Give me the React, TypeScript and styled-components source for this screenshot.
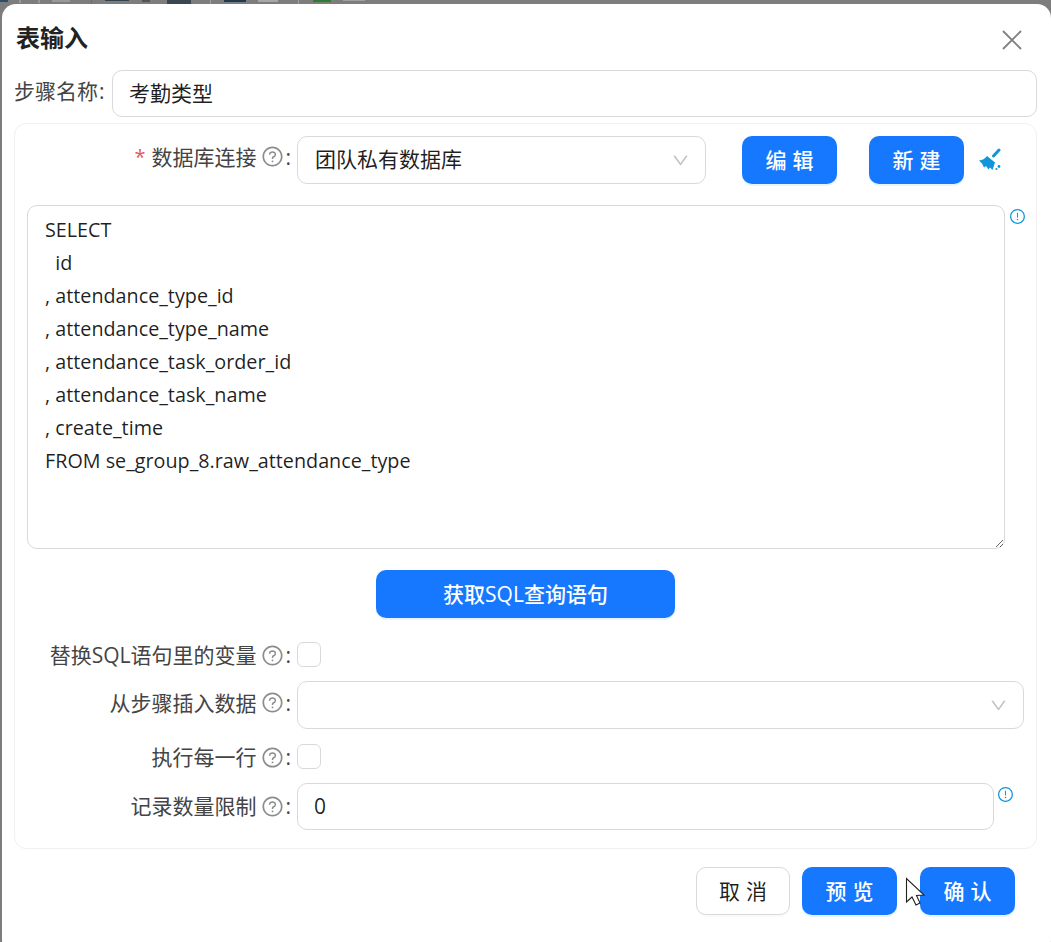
import styled, { createGlobalStyle } from 'styled-components';
import { AiOutlineDown, AiOutlineExclamationCircle, AiOutlineQuestionCircle } from 'react-icons/ai';

const sqlText = `SELECT
  id
, attendance_type_id
, attendance_type_name
, attendance_task_order_id
, attendance_task_name
, create_time
FROM se_group_8.raw_attendance_type`;

const GlobalStyle = createGlobalStyle`
  html, body {
    margin: 0;
    padding: 0;
    background: #7d7d7d;
  }
  * {
    box-sizing: border-box;
  }
`;

const Backdrop = styled.div`
  position: relative;
  width: 1051px;
  height: 942px;
  padding: 4px 0 0 2px;
  overflow: hidden;
  background: #7d7d7d;
  font-family: "Open Sans", "Noto Sans CJK SC", sans-serif;
  font-size: 21px;
  line-height: 24px;
  color: rgba(0, 0, 0, 0.88);
`;

const ToolbarPeek = styled.svg`
  position: absolute;
  top: 0;
  left: 0;
`;

const Modal = styled.div`
  position: relative;
  height: 950px;
  padding: 0 14px 0 12px;
  background: #fff;
  border-radius: 14px;
`;

const ModalHeader = styled.div`
  display: flex;
  align-items: center;
  justify-content: space-between;
  height: 66px;
  padding: 2px 15px 0 2px;
`;

const Title = styled.div`
  font-size: 24px;
  font-weight: 700;
  color: #222;
`;

const CloseIcon = styled.svg`
  display: block;
  margin-top: 4px;
`;

const NameRow = styled.div`
  display: flex;
  align-items: center;
  height: 47px;
`;

const NameLabel = styled.label`
  width: 98px;
  margin-top: -6px;
  color: #444;
  white-space: nowrap;
`;

const TextInput = styled.input<{ $width?: number }>`
  display: block;
  flex: ${({ $width }) => ($width ? 'none' : '1')};
  width: ${({ $width }) => ($width ? `${$width}px` : 'auto')};
  height: 47px;
  padding: 0 16px ${({ $width }) => ($width ? 1 : 3)}px;
  background: #fff;
  border: 1px solid #d9d9d9;
  border-radius: 10px;
  outline: none;
  font: inherit;
  color: rgba(0, 0, 0, 0.88);
`;

const Card = styled.div`
  margin-top: 6px;
  padding: 12px 12px 18px;
  border: 1px solid #f0f0f0;
  border-radius: 12px;
`;

const FormRow = styled.div<{ $top: number }>`
  display: flex;
  align-items: center;
  margin-top: ${({ $top }) => $top}px;
`;

const Label = styled.div<{ $lift: number }>`
  display: flex;
  flex: none;
  align-items: center;
  justify-content: flex-end;
  width: 270px;
  padding-right: 6px;
  margin-top: ${({ $lift }) => -$lift}px;
  color: #444;
  white-space: nowrap;
`;

const Required = styled.span`
  margin-right: 6px;
  color: #e5585f;
  font-size: 20px;
`;

const HelpIcon = styled(AiOutlineQuestionCircle)`
  flex: none;
  margin-left: 5px;
  font-size: 23px;
  color: #8c8c8c;
`;

const Colon = styled.span`
  margin-left: 1px;
`;

const SelectBox = styled.div<{ $width?: number }>`
  display: flex;
  flex: ${({ $width }) => ($width ? 'none' : '1')};
  align-items: center;
  justify-content: space-between;
  width: ${({ $width }) => ($width ? `${$width}px` : 'auto')};
  height: 48px;
  padding: 0 15px 0 17px;
  border: 1px solid #d9d9d9;
  border-radius: 10px;
`;

const SelectValue = styled.span`
  margin-top: -2px;
`;

const SelectArrow = styled(AiOutlineDown)`
  font-size: 19px;
  color: #bfbfbf;
`;

const Button = styled.button<{ $primary?: boolean; $width?: number; $spaced?: boolean }>`
  flex: none;
  width: ${({ $width }) => $width ?? 95}px;
  height: 48px;
  padding: 0;
  background: ${({ $primary }) => ($primary ? '#1677ff' : '#fff')};
  border: ${({ $primary }) => ($primary ? 'none' : '1px solid #d9d9d9')};
  border-radius: 10px;
  box-shadow: ${({ $primary }) =>
    $primary ? '0 2px 0 rgba(5, 145, 255, 0.1)' : '0 2px 0 rgba(0, 0, 0, 0.02)'};
  font: inherit;
  font-weight: ${({ $primary }) => ($primary ? 500 : 400)};
  color: ${({ $primary }) => ($primary ? '#fff' : 'rgba(0, 0, 0, 0.88)')};
  letter-spacing: ${({ $spaced }) => ($spaced ? '0.28em' : '0')};
  text-indent: ${({ $spaced }) => ($spaced ? '0.28em' : '0')};
`;

const ConnectionActions = styled.div`
  display: flex;
  align-items: center;
  margin-left: 36px;
`;

const NewButton = styled(Button)`
  margin-left: 32px;
`;

const BroomIcon = styled.svg`
  display: block;
  margin-left: 14px;
  color: #1296db;
`;

const SqlRow = styled.div`
  display: flex;
  align-items: flex-start;
  margin-top: 21px;
`;

const SqlArea = styled.textarea`
  display: block;
  flex: none;
  width: 978px;
  height: 344px;
  padding: 7px 17px;
  border: 1px solid #d9d9d9;
  border-radius: 10px;
  outline: none;
  font: inherit;
  font-size: 19.75px;
  line-height: 33px;
  color: rgba(0, 0, 0, 0.88);
`;

const InfoIcon = styled(AiOutlineExclamationCircle)`
  flex: none;
  margin: 3px 0 0 4px;
  font-size: 17px;
  color: #1296db;
`;

const LimitInfoIcon = styled(InfoIcon)`
  align-self: flex-start;
  margin-left: 3px;
`;

const CheckBox = styled.span`
  display: block;
  width: 24px;
  height: 25px;
  background: #fff;
  border: 1px solid #d9d9d9;
  border-radius: 6px;
`;

const CenterRow = styled.div`
  display: flex;
  justify-content: center;
  margin-top: 21px;
`;

const Footer = styled.div`
  display: flex;
  justify-content: flex-end;
  gap: 12px;
  margin-top: 18px;
  padding-right: 22px;
`;

const ConfirmButton = styled(Button)`
  margin-left: 11px;
`;

const Cursor = styled.svg`
  position: absolute;
  top: 874px;
  left: 904px;
`;

const peekMarks: [number, number, number, string][] = [
  [0, 8, 2, '#2b4f6b'],
  [19, 2, 3, '#999'],
  [38, 2, 3, '#999'],
  [52, 18, 2, '#999'],
  [91, 1, 4, '#2f7fb8'],
  [105, 24, 1, '#33424d'],
  [142, 8, 2, '#555'],
  [167, 24, 4, '#3a4650'],
  [210, 1, 4, '#a0a0a0'],
  [224, 22, 2, '#1f3b52'],
  [258, 20, 2, '#a8a8a8'],
  [298, 1, 4, '#a0a0a0'],
  [313, 18, 2, '#2e7d32'],
  [343, 22, 1, '#a0a0a0'],
];

const App = () => {
  return (
    <Backdrop>
      <GlobalStyle />
      <ToolbarPeek width={400} height={4}>
        {peekMarks.map(([x, w, h, fill]) => (
          <rect key={x} x={x} y={0} width={w} height={h} fill={fill} />
        ))}
      </ToolbarPeek>
      <Modal>
        <ModalHeader>
          <Title>表输入</Title>
          <CloseIcon width={20} height={20} viewBox="0 0 20 20">
            <path d="M1 1 L19 19 M19 1 L1 19" stroke="#808080" strokeWidth="1.8" fill="none" />
          </CloseIcon>
        </ModalHeader>
        <NameRow>
          <NameLabel>步骤名称<Colon>:</Colon></NameLabel>
          <TextInput readOnly value="考勤类型" />
        </NameRow>
        <Card>
          <FormRow $top={0}>
            <Label $lift={7}>
              <Required>*</Required>数据库连接<HelpIcon /><Colon>:</Colon>
            </Label>
            <SelectBox $width={409}>
              <SelectValue>团队私有数据库</SelectValue>
              <SelectArrow />
            </SelectBox>
            <ConnectionActions>
              <Button $primary $spaced>编辑</Button>
              <NewButton $primary $spaced>新建</NewButton>
              <BroomIcon width={24} height={24} viewBox="0 0 24 24">
                <path d="M21 2 L15.5 8" stroke="currentColor" strokeWidth="3" strokeLinecap="round" />
                <path
                  d="M9 8 L17 14.5 L14.5 22 L12 19.5 L10.5 21.5 L8 18 L6 19.5 L4 15.5 L1 12.5 Q6 12 9 8 Z"
                  fill="currentColor"
                />
                <circle cx="21" cy="18.5" r="1.4" fill="currentColor" />
                <circle cx="18.5" cy="21" r="1.1" fill="currentColor" />
              </BroomIcon>
            </ConnectionActions>
          </FormRow>
          <SqlRow>
            <SqlArea readOnly spellCheck={false} defaultValue={sqlText} />
            <InfoIcon />
          </SqlRow>
          <CenterRow>
            <Button $primary $width={299}>获取SQL查询语句</Button>
          </CenterRow>
          <FormRow $top={24}>
            <Label $lift={-1}>替换SQL语句里的变量<HelpIcon /><Colon>:</Colon></Label>
            <CheckBox />
          </FormRow>
          <FormRow $top={14}>
            <Label $lift={5}>从步骤插入数据<HelpIcon /><Colon>:</Colon></Label>
            <SelectBox>
              <span />
              <SelectArrow />
            </SelectBox>
          </FormRow>
          <FormRow $top={15}>
            <Label $lift={-1}>执行每一行<HelpIcon /><Colon>:</Colon></Label>
            <CheckBox />
          </FormRow>
          <FormRow $top={14}>
            <Label $lift={1}>记录数量限制<HelpIcon /><Colon>:</Colon></Label>
            <TextInput readOnly value="0" $width={697} />
            <LimitInfoIcon />
          </FormRow>
        </Card>
        <Footer>
          <Button $spaced $width={94}>取消</Button>
          <Button $primary $spaced>预览</Button>
          <ConfirmButton $primary $spaced>确认</ConfirmButton>
        </Footer>
      </Modal>
      <Cursor width={24} height={34} viewBox="0 0 24 34">
        <path d="M2.5 4.5 L2.5 28 L8 23 L12 31 L16 29 L12.5 21.5 L20 21 Z" fill="#fff" stroke="#222" strokeWidth="1.1" />
      </Cursor>
    </Backdrop>
  );
};

export default App;
